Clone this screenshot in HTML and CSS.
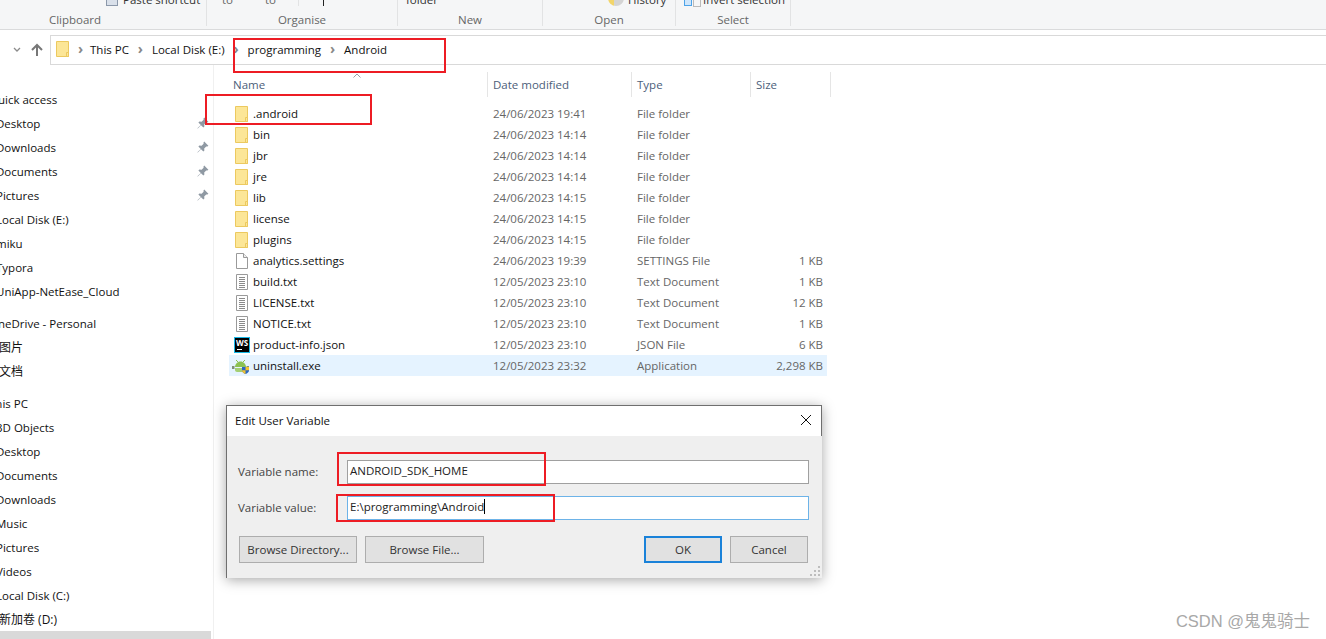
FILE: index.html

```html
<!DOCTYPE html>
<html lang="en">
<head>
    <meta charset="UTF-8">
    <meta name="viewport" content="width=device-width, initial-scale=1.0">
    <link rel="stylesheet" href="styles.css">
    <title>Android</title>
</head>
<body>
    <svg class="sprites" width="0" height="0">
        <symbol id="folder" viewBox="0 0 16 16">
            <path d="M1.500.5h12v15h-12z" fill="#fce697" stroke="#ecc95f"/>
            <path d="M11.500 11.500h2v4h-2z" fill="#fce697" stroke="#ecc95f"/>
        </symbol>
        <symbol id="blank" viewBox="0 0 16 16">
            <path d="M2.500.5h7l4 4v11h-11z" fill="#fff" stroke="#9a9a9a"/>
            <path d="M9.500.5v4h4" fill="#eee" stroke="#9a9a9a"/>
        </symbol>
        <symbol id="text" viewBox="0 0 16 16">
            <path d="M2.500.5h11v15h-11z" fill="#fff" stroke="#9a9a9a"/>
            <path d="M5 3.500h6M5 5.500h6M5 7.500h6M5 9.500h6M5 11.500h6M5 13.500h6" stroke="#8a8a8a"/>
        </symbol>
        <symbol id="pin" viewBox="0 0 12 12">
            <path d="M7.200.6l4.200 4.200-1 .7-1.200-.1-2 2 .2 2.200-1 1L4 8.200.8 11.600.4 11.200 3.800 8 1.400 5.600l1-1 2.200.2 2-2-.1-1.200z" fill="#8f99a3"/>
        </symbol>
    </svg>

    <header class="ribbon">
        <section class="group group-clipboard">
            <div class="group-top"><span class="paste-icon"></span>Paste shortcut</div>
            <div class="group-name">Clipboard</div>
        </section>
        <section class="group group-organise">
            <div class="group-top"><span class="top-word">to</span><span class="top-word">to</span><span class="top-tick"></span></div>
            <div class="group-name">Organise</div>
        </section>
        <section class="group group-new">
            <div class="group-top">folder</div>
            <div class="group-name">New</div>
        </section>
        <section class="group group-open">
            <div class="group-top"><span class="history-icon"></span>History</div>
            <div class="group-name">Open</div>
        </section>
        <section class="group group-select">
            <div class="group-top"><span class="invert-icon"></span>Invert selection</div>
            <div class="group-name">Select</div>
        </section>
    </header>

    <nav class="address-row">
        <svg class="nav-caret" width="8" height="6" viewBox="0 0 8 6"><path d="M1 1l3 3 3-3" fill="none" stroke="#8b8b8b" stroke-width="1.300"/></svg>
        <svg class="nav-up" width="14" height="14" viewBox="0 0 14 14"><path d="M7 13V2M2 7l5-5 5 5" fill="none" stroke="#777" stroke-width="2"/></svg>
        <div class="address-box">
            <svg class="icon"><use href="#folder"/></svg>
            <span class="crumb-sep first">›</span><span class="crumb">This PC</span>
            <span class="crumb-sep">›</span><span class="crumb">Local Disk (E:)</span>
            <span class="crumb-sep">›</span><span class="crumb">programming</span>
            <span class="crumb-sep">›</span><span class="crumb">Android</span>
        </div>
    </nav>

    <main class="explorer">
        <aside class="sidebar">
            <ul class="tree">
                <li class="tree-head">Quick access</li>
                <li>Desktop<svg class="pin"><use href="#pin"/></svg></li>
                <li>Downloads<svg class="pin"><use href="#pin"/></svg></li>
                <li>Documents<svg class="pin"><use href="#pin"/></svg></li>
                <li>Pictures<svg class="pin"><use href="#pin"/></svg></li>
                <li>Local Disk (E:)</li>
                <li>miku</li>
                <li>Typora</li>
                <li>UniApp-NetEase_Cloud</li>
                <li class="tree-head tree-gap">OneDrive - Personal</li>
                <li class="tree-cjk">图片</li>
                <li class="tree-cjk">文档</li>
                <li class="tree-head tree-gap">This PC</li>
                <li>3D Objects</li>
                <li>Desktop</li>
                <li>Documents</li>
                <li>Downloads</li>
                <li>Music</li>
                <li>Pictures</li>
                <li>Videos</li>
                <li>Local Disk (C:)</li>
                <li class="tree-cjk">新加卷 (D:)</li>
                <li class="tree-current">Local Disk (E:)</li>
            </ul>
        </aside>

        <section class="files">
            <div class="file-head">
                <span class="col-name">Name<svg class="sort-caret" width="8" height="5" viewBox="0 0 8 5"><path d="M.5 4.500L4 1l3.500 3.500" fill="none" stroke="#9aa0a6"/></svg></span>
                <span class="col-date">Date modified</span>
                <span class="col-type">Type</span>
                <span class="col-size">Size</span>
            </div>
            <div class="file-row"><svg class="icon"><use href="#folder"/></svg><span class="file-name">.android</span><span class="file-date">24/06/2023 19:41</span><span class="file-type">File folder</span><span class="file-size"></span></div>
            <div class="file-row"><svg class="icon"><use href="#folder"/></svg><span class="file-name">bin</span><span class="file-date">24/06/2023 14:14</span><span class="file-type">File folder</span><span class="file-size"></span></div>
            <div class="file-row"><svg class="icon"><use href="#folder"/></svg><span class="file-name">jbr</span><span class="file-date">24/06/2023 14:14</span><span class="file-type">File folder</span><span class="file-size"></span></div>
            <div class="file-row"><svg class="icon"><use href="#folder"/></svg><span class="file-name">jre</span><span class="file-date">24/06/2023 14:14</span><span class="file-type">File folder</span><span class="file-size"></span></div>
            <div class="file-row"><svg class="icon"><use href="#folder"/></svg><span class="file-name">lib</span><span class="file-date">24/06/2023 14:15</span><span class="file-type">File folder</span><span class="file-size"></span></div>
            <div class="file-row"><svg class="icon"><use href="#folder"/></svg><span class="file-name">license</span><span class="file-date">24/06/2023 14:15</span><span class="file-type">File folder</span><span class="file-size"></span></div>
            <div class="file-row"><svg class="icon"><use href="#folder"/></svg><span class="file-name">plugins</span><span class="file-date">24/06/2023 14:15</span><span class="file-type">File folder</span><span class="file-size"></span></div>
            <div class="file-row"><svg class="icon"><use href="#blank"/></svg><span class="file-name">analytics.settings</span><span class="file-date">24/06/2023 19:39</span><span class="file-type">SETTINGS File</span><span class="file-size">1 KB</span></div>
            <div class="file-row"><svg class="icon"><use href="#text"/></svg><span class="file-name">build.txt</span><span class="file-date">12/05/2023 23:10</span><span class="file-type">Text Document</span><span class="file-size">1 KB</span></div>
            <div class="file-row"><svg class="icon"><use href="#text"/></svg><span class="file-name">LICENSE.txt</span><span class="file-date">12/05/2023 23:10</span><span class="file-type">Text Document</span><span class="file-size">12 KB</span></div>
            <div class="file-row"><svg class="icon"><use href="#text"/></svg><span class="file-name">NOTICE.txt</span><span class="file-date">12/05/2023 23:10</span><span class="file-type">Text Document</span><span class="file-size">1 KB</span></div>
            <div class="file-row">
                <svg class="icon" viewBox="0 0 16 16"><rect x=".5" y=".5" width="15" height="15" fill="#000" stroke="#18b7e6"/><text x="2" y="9" class="ws-mark">WS</text><path d="M3 12.500h5" stroke="#fff"/></svg>
                <span class="file-name">product-info.json</span><span class="file-date">12/05/2023 23:10</span><span class="file-type">JSON File</span><span class="file-size">6 KB</span>
            </div>
            <div class="file-row file-row-hover">
                <svg class="icon icon-wide" viewBox="0 0 18 16"><path d="M4 2l2 2M13 2l-2 2" stroke="#8cc152"/><path d="M3 9c0-3 2.500-5.500 5.500-5.500S14 6 14 9z" fill="#8cc152"/><path d="M0 8h2.500v3H0zM14.500 8H17v2h-2.500z" fill="#7f8f78"/><path d="M3 10h11v2c0 1-1 2-2 2H5c-1 0-2-1-2-2z" fill="#a4cf73"/><path d="M10 9h7v3.500c0 1.700-1.700 2.800-3.500 3.500-1.800-.7-3.500-1.800-3.500-3.500z" fill="#2a66c4"/><path d="M13.500 9H17v3.200h-3.500zM10 12.200h3.500V16c-1.800-.7-3.500-1.800-3.500-3.500z" fill="#f2c230"/></svg>
                <span class="file-name">uninstall.exe</span><span class="file-date">12/05/2023 23:32</span><span class="file-type">Application</span><span class="file-size">2,298 KB</span>
            </div>
        </section>
    </main>

    <div class="mark mark-path"></div>
    <div class="mark mark-android"></div>

    <div class="dialog">
        <div class="dialog-title">
            <span>Edit User Variable</span>
            <svg width="12" height="12" viewBox="0 0 12 12"><path d="M1 1l10 10M11 1L1 11" stroke="#111" stroke-width="1"/></svg>
        </div>
        <div class="dialog-body">
            <div class="field">
                <label>Variable name:</label>
                <div class="input">ANDROID_SDK_HOME</div>
            </div>
            <div class="field">
                <label>Variable value:</label>
                <div class="input input-focus">E:\programming\Android<span class="caret"></span></div>
            </div>
            <div class="buttons">
                <button class="btn btn-dir">Browse Directory...</button>
                <button class="btn btn-file">Browse File...</button>
                <button class="btn btn-ok">OK</button>
                <button class="btn btn-cancel">Cancel</button>
            </div>
            <svg class="grip" width="12" height="12" viewBox="0 0 12 12"><path d="M9 1h2v2H9zM5 5h2v2H5zM9 5h2v2H9zM1 9h2v2H1zM5 9h2v2H5zM9 9h2v2H9z" fill="#bdbdbd"/></svg>
        </div>
        <div class="mark mark-varname"></div>
        <div class="mark mark-varvalue"></div>
    </div>

    <div class="watermark">CSDN @鬼鬼骑士</div>
</body>
</html>
```

FILE: styles.css

```css
* {
    box-sizing: border-box;
}

html, body {
    height: 100%;
}

body {
    margin: 0;
    overflow: hidden;
    position: relative;
    background: #fff;
    color: #111;
    font-family: "Open Sans", "Noto Sans CJK SC", sans-serif;
    font-size: 11.5px;
}

.sprites {
    position: absolute;
}

.icon {
    width: 16px;
    height: 16px;
    flex: none;
}

/* ribbon, scrolled so only the bottom of the big buttons shows */
.ribbon {
    display: flex;
    height: 30px;
    background: #f5f6f7;
    border-bottom: 1px solid #dadbdc;
}

.group {
    display: flex;
    flex-direction: column;
    height: 26px;
    border-right: 1px solid #e2e3e4;
}

.group-clipboard { width: 207px; }
.group-organise { width: 191px; }
.group-new { width: 145px; }
.group-open { width: 133px; }
.group-select { width: 115px; }

.group-top {
    flex: none;
    height: 12px;
    margin-top: -6px;
    display: flex;
    align-items: flex-end;
    line-height: 12px;
    color: #333;
    white-space: nowrap;
}

.group-clipboard .group-top { padding-left: 106px; }
.group-organise .group-top { padding-left: 15px; }
.group-new .group-top { padding-left: 8px; }
.group-open .group-top { padding-left: 65px; }
.group-select .group-top { padding-left: 8px; }

.top-word {
    width: 43px;
    height: 12px;
    color: #666;
}

.top-word:nth-child(2) {
    width: 34px;
    border-right: 1px solid #e2e3e4;
}

.top-tick {
    width: 1px;
    height: 9px;
    margin-left: 24px;
    background: #222;
}

.group-name {
    flex: none;
    margin-top: 6px;
    text-align: center;
    line-height: 16px;
    color: #666;
}

.group-clipboard .group-name { padding-right: 56px; }

.paste-icon, .history-icon, .invert-icon {
    flex: none;
    height: 10px;
}

.paste-icon {
    width: 12px;
    margin-right: 5px;
    background: #d9e0ea;
    border: 1px solid #8b98aa;
}

.history-icon {
    width: 16px;
    margin-right: 4px;
    border-radius: 0 0 8px 8px;
    background: linear-gradient(90deg, #f2d56b 40%, #d4d4d4 40%);
}

.invert-icon {
    width: 8px;
    margin-right: 11px;
    background: #cfe6fb;
    border: 1px solid #4da3e8;
}

.invert-icon::after {
    content: "";
    display: block;
    width: 6px;
    height: 8px;
    margin-left: 8px;
    border: 1px solid #bbb;
    background: #f5f6f7;
}

/* address bar */
.address-row {
    display: flex;
    align-items: center;
    height: 35px;
    padding-top: 5px;
}

.nav-caret { margin-left: 13px; }

.nav-up { margin-left: 9px; }

.address-box {
    display: flex;
    align-items: center;
    flex: 1;
    height: 30px;
    margin-left: 6px;
    padding: 0 0 2px 4px;
    border: solid #d9d9d9;
    border-width: 1px 0 1px 1px;
}

.crumb-sep {
    width: 23px;
    text-align: center;
    color: #888;
    font-size: 14px;
    font-weight: 700;
    line-height: 14px;
}

.crumb-sep.first { width: 19px; }

.crumb { white-space: nowrap; }

/* panes */
.explorer {
    display: flex;
    height: 574px;
}

.sidebar {
    width: 214px;
    flex: none;
    overflow: hidden;
    border-right: 1px solid #f0f0f0;
    padding-top: 22px;
}

.tree {
    list-style: none;
    margin: 0;
    padding: 0;
}

.tree li {
    display: flex;
    align-items: center;
    justify-content: space-between;
    height: 24px;
    padding-right: 2px;
    margin-right: 2px;
    text-indent: -4px;
    white-space: nowrap;
}

.tree .tree-head { text-indent: -11px; }

.tree .tree-cjk {
    text-indent: -1px;
    font-size: 12px;
}

.tree .tree-gap { margin-top: 8px; }

.tree .tree-current { background: #d9d9d9; }

.pin {
    width: 12px;
    height: 12px;
}

.files {
    flex: 1;
    padding-left: 15px;
    padding-top: 6px;
}

.file-head {
    display: flex;
    align-items: center;
    height: 26px;
    color: #4c607a;
    margin-bottom: 6px;
}

.file-head span {
    height: 25px;
    line-height: 25px;
    border-right: 1px solid #e5e5e5;
    padding-left: 5px;
}

.file-head .col-name {
    position: relative;
    width: 259px;
    padding-left: 4px;
}

.col-date { width: 144px; }
.col-type { width: 119px; }
.col-size { width: 80px; }

.sort-caret {
    position: absolute;
    left: 124px;
    top: 1px;
}

.file-row {
    display: flex;
    align-items: center;
    width: 598px;
    height: 21px;
    color: #666;
}

.file-row .icon { margin: 0 3px 0 5px; }

.file-row .icon-wide {
    width: 18px;
    margin-left: 3px;
    margin-right: 3px;
}

.file-name {
    width: 240px;
    color: #111;
}

.file-date { width: 144px; }
.file-type { width: 100px; }

.file-size {
    width: 86px;
    text-align: right;
}

.file-row-hover { background: #e5f3ff; }

.ws-mark {
    font-size: 8px;
    font-weight: 700;
    fill: #fff;
}

/* red annotation boxes */
.mark {
    position: absolute;
    border: 2px solid #ed1c24;
    pointer-events: none;
}

.mark-path { left: 233px; top: 38px; width: 213px; height: 35px; }
.mark-android { left: 205px; top: 94px; width: 167px; height: 31px; }
.mark-varname { left: 110px; top: 46px; width: 209px; height: 34px; }
.mark-varvalue { left: 109px; top: 88px; width: 219px; height: 28px; }

/* dialog */
.dialog {
    position: absolute;
    left: 226px;
    top: 405px;
    width: 596px;
    height: 173px;
    border-top: 1px solid #6f6f6f;
    border-left: 1px solid #6f6f6f;
    background: #efefef;
    box-shadow: 0 2px 12px rgba(0, 0, 0, .35);
}

.dialog-title {
    display: flex;
    align-items: center;
    justify-content: space-between;
    height: 30px;
    padding: 0 9px 2px 8px;
    background: #fff;
    border-right: 1px solid #6f6f6f;
}

.dialog-body {
    display: flex;
    flex-direction: column;
    padding: 24px 13px 0 12px;
    color: #444;
}

.field {
    display: flex;
    align-items: center;
    height: 24px;
    margin-bottom: 12px;
}

.field label {
    width: 109px;
    flex: none;
    margin-left: -1px;
    padding-bottom: 1px;
}

.input {
    flex: 1;
    height: 24px;
    line-height: 20px;
    padding-left: 2px;
    background: #fff;
    border: 1px solid #a0a0a0;
    color: #222;
}

.input-focus { border-color: #6db3e8; }

.caret {
    display: inline-block;
    width: 1px;
    height: 15px;
    background: #000;
    vertical-align: -3px;
}

.buttons {
    display: flex;
    margin-top: 4px;
    padding-right: 1px;
}

.btn {
    height: 27px;
    background: #e1e1e1;
    border: 1px solid #adadad;
    font: inherit;
    color: #333;
    padding: 0;
}

.btn-dir { width: 118px; }
.btn-file { width: 119px; margin-left: 8px; }
.btn-ok { width: 78px; margin-left: auto; border: 2px solid #1a82d9; }
.btn-cancel { width: 78px; margin-left: 8px; }

.grip {
    position: absolute;
    right: 1px;
    bottom: 1px;
}

.watermark {
    position: absolute;
    right: 16px;
    top: 611px;
    font-family: "Liberation Sans", "Noto Sans CJK SC", sans-serif;
    font-size: 16.5px;
    line-height: 20px;
    color: #a8a8a8;
}
```
